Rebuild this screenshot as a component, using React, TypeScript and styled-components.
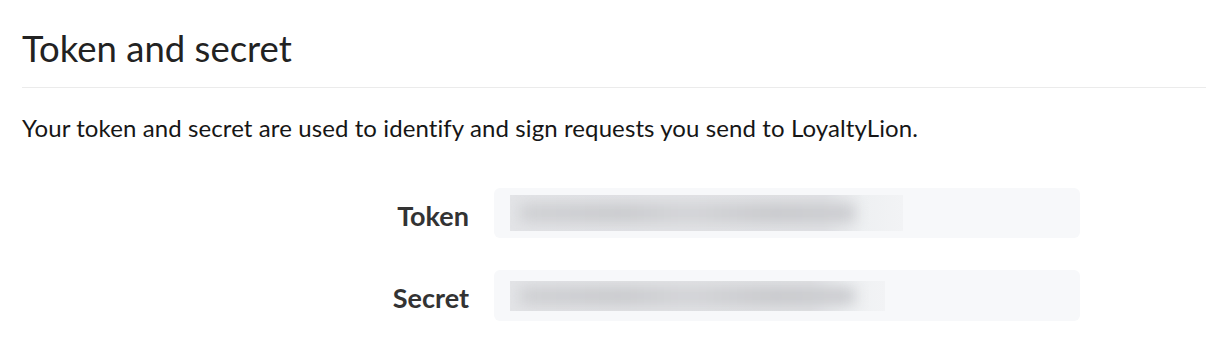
import React from "react";
import styled, { createGlobalStyle } from "styled-components";

const GlobalStyle = createGlobalStyle`
  html, body {
    margin: 0;
    padding: 0;
    background: #ffffff;
  }
  body {
    font-family: Lato, "Open Sans", "Liberation Sans", sans-serif;
    -webkit-font-smoothing: antialiased;
  }
`;

const Page = styled.div`
  padding: 27px 0 0 22px;
  width: 1184px;
`;

const Header = styled.header`
  border-bottom: 1px solid #ebebeb;
  padding-bottom: 17px;
`;

const Title = styled.h2`
  margin: 0;
  font-size: 36.5px;
  line-height: 43px;
  font-weight: 400;
  color: #222222;
`;

const Intro = styled.p`
  margin: 25px 0 0;
  font-size: 24px;
  line-height: 30px;
  letter-spacing: 0.1px;
  color: #161616;
`;

const Form = styled.div`
  display: grid;
  grid-template-columns: 447px 586px;
  column-gap: 25px;
  row-gap: 32px;
  margin-top: 45px;
`;

const Label = styled.div`
  text-align: right;
  font-size: 27px;
  font-weight: 700;
  color: #333333;
  align-self: center;
  padding-top: 4px;
`;

const Field = styled.div<{ $h: number }>`
  height: ${(p) => p.$h}px;
  background: #f7f8fa;
  border-radius: 6px;
  display: flex;
  align-items: center;
  padding: 0 16px;
`;

const Redacted = styled.div<{ $w: number; $h: number }>`
  width: ${(p) => p.$w}px;
  height: ${(p) => p.$h}px;
  overflow: hidden;
  display: flex;
  align-items: center;
  background: linear-gradient(
    to right,
    #e3e4e7 0%,
    #e1e2e5 80%,
    #eef0f2 90%,
    #f2f3f5 100%
  );
`;

const Smudge = styled.div<{ $w: number }>`
  width: ${(p) => p.$w}px;
  height: 18px;
  margin-left: 10px;
  filter: blur(7px);
  background: linear-gradient(
    to right,
    #cfd0d3 0%,
    #c8c9cc 30%,
    #d2d3d6 50%,
    #c7c8cb 75%,
    #cbccd0 100%
  );
`;

type Row = { label: string; h: number; bw: number; bh: number; sw: number };

const rows: Row[] = [
  { label: "Token", h: 50, bw: 393, bh: 36, sw: 335 },
  { label: "Secret", h: 51, bw: 375, bh: 30, sw: 335 },
];

export default function App() {
  return (
    <>
      <GlobalStyle />
      <Page>
        <Header>
          <Title>Token and secret</Title>
        </Header>
        <Intro>
          Your token and secret are used to identify and sign requests you send to LoyaltyLion.
        </Intro>
        <Form>
          {rows.map((r) => (
            <React.Fragment key={r.label}>
              <Label>{r.label}</Label>
              <Field $h={r.h}>
                <Redacted $w={r.bw} $h={r.bh}>
                  <Smudge $w={r.sw} />
                </Redacted>
              </Field>
            </React.Fragment>
          ))}
        </Form>
      </Page>
    </>
  );
}
